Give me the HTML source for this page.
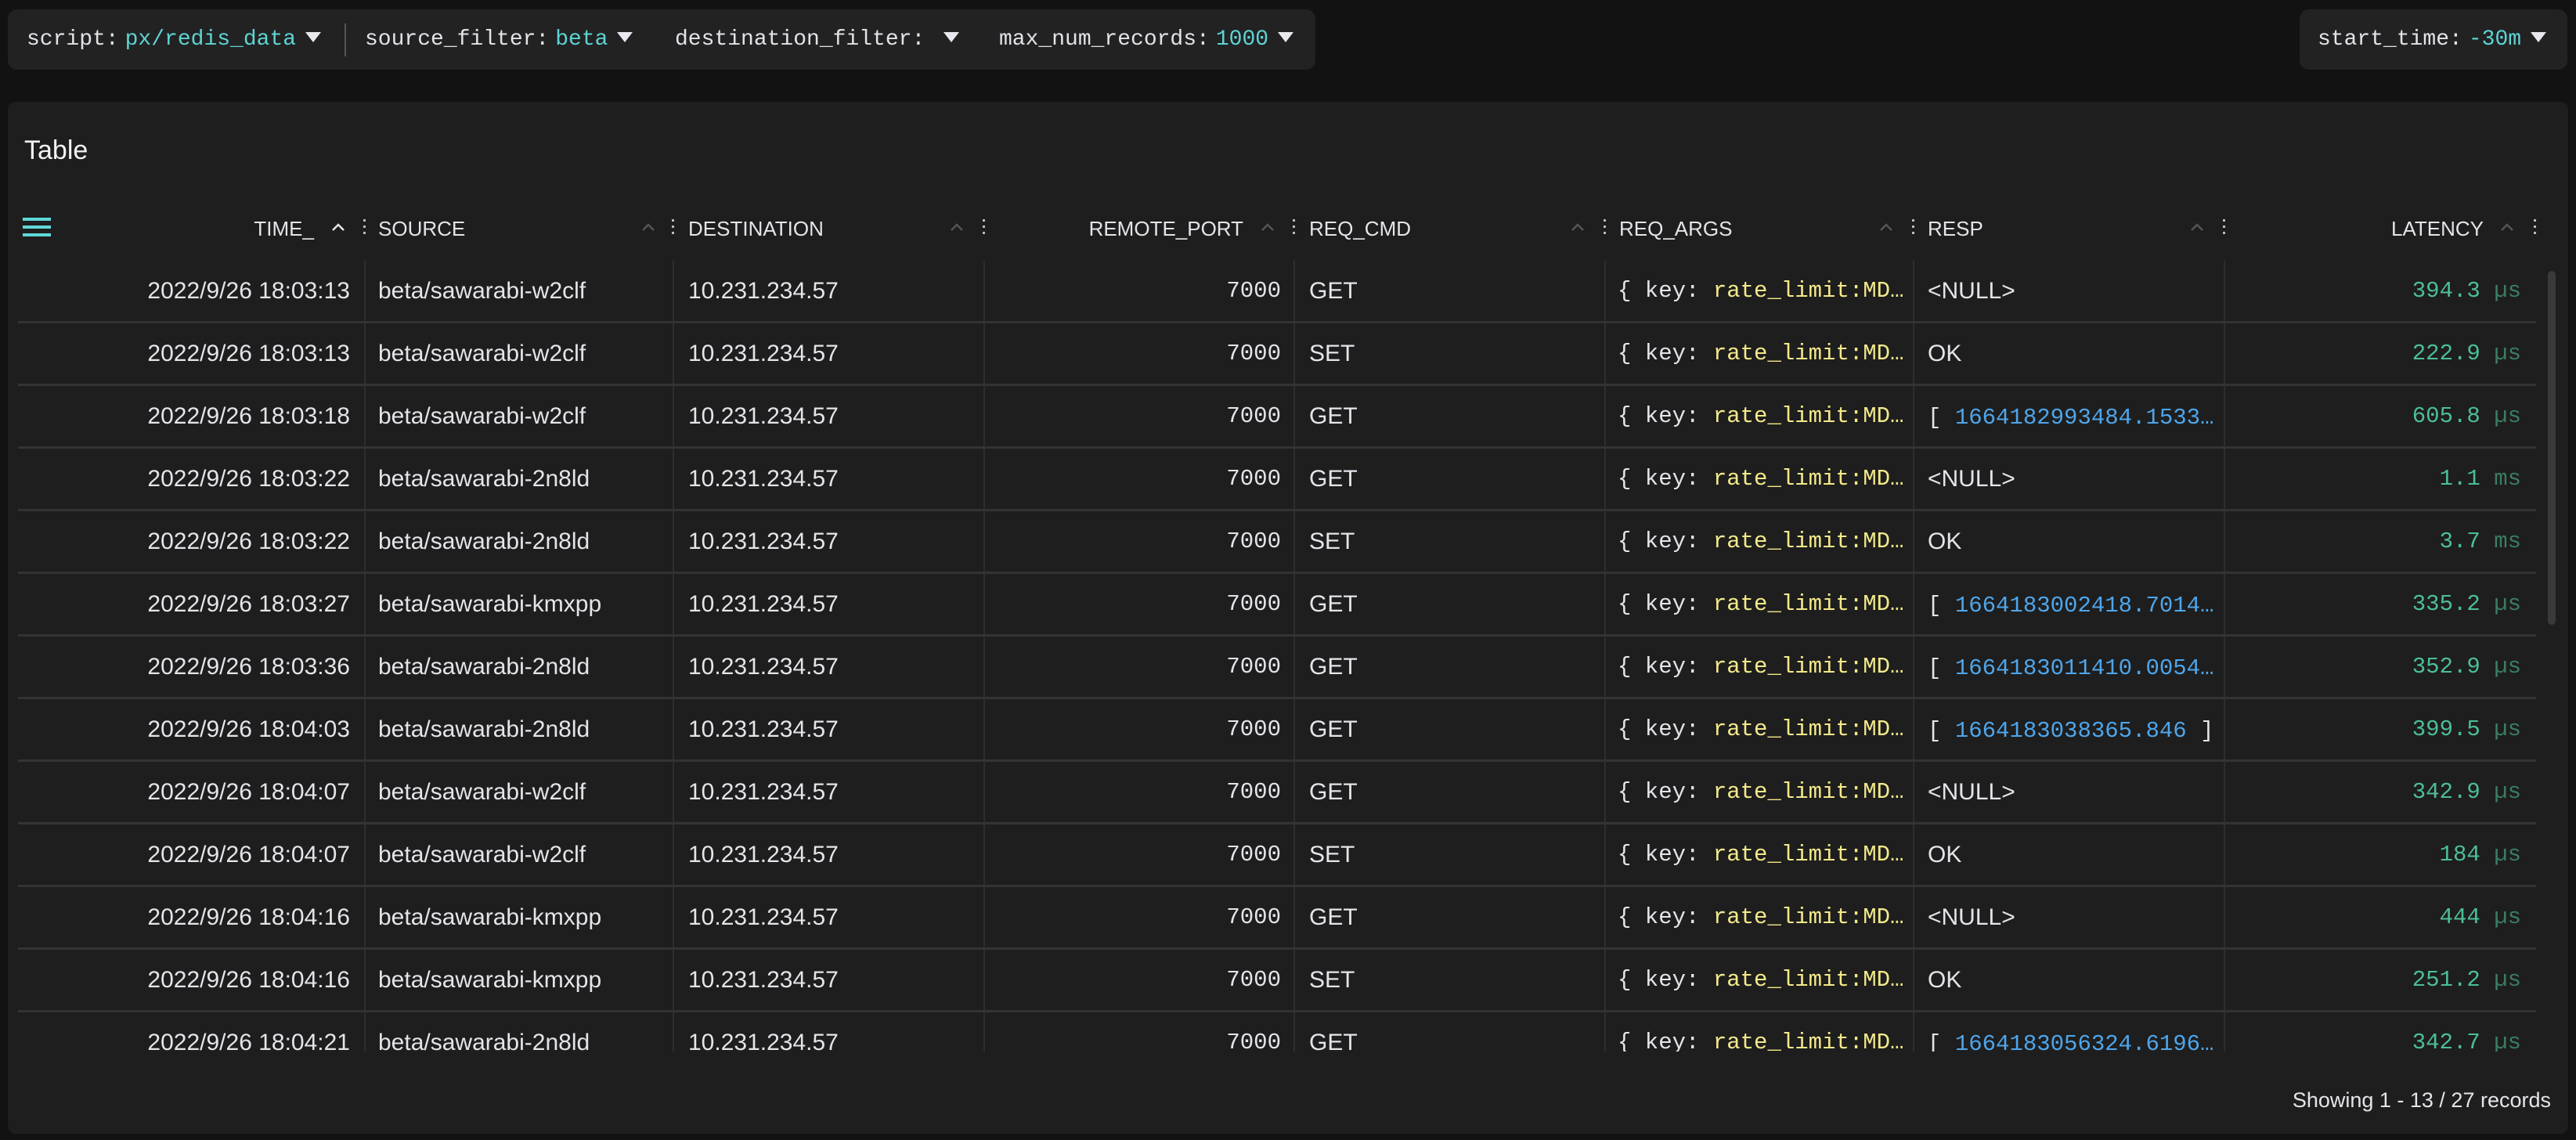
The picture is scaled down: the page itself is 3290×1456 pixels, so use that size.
<!DOCTYPE html>
<html><head><meta charset="utf-8"><style>
*{margin:0;padding:0;box-sizing:border-box}
body{width:3290px;height:1456px;background:#121212;position:relative;overflow:hidden;font-family:"Liberation Sans",sans-serif;color:#e2e2e8}
.bar{position:absolute;top:12px;height:77px;background:#222223;border-radius:12px}
.f{position:absolute;top:0;height:77px;line-height:77px;font-family:"Liberation Mono",monospace;font-size:28px;white-space:nowrap;color:#e2e2e8}
.f b{font-weight:normal;color:#5fd3d3;margin-left:8px}
.tri{display:inline-block;width:0;height:0;border-left:10px solid transparent;border-right:10px solid transparent;border-top:13px solid #e8e8ee;margin-left:12px;vertical-align:3px}
.panel{position:absolute;left:10px;top:130px;width:3270px;height:1318px;background:#1e1e1e;border-radius:10px}
.title{position:absolute;left:31px;top:173px;font-size:34px;color:#f2f2f2}
.ham{position:absolute;left:29px;width:36px;height:4px;background:#5fd8d8}
.h{position:absolute;top:270px;height:44px;line-height:44px;font-size:26px;color:#e4e4ea;white-space:nowrap}
.vl{position:absolute;top:333px;width:2px;height:1010px;background:#2e2e2e}
.hl{position:absolute;left:23px;width:3216px;height:3px;background:#333}
.c{position:absolute;height:80px;line-height:82px;font-size:30px;white-space:nowrap;color:#e4e4ea}
.m{font-family:"Liberation Mono",monospace;font-size:29px}
.y{color:#f3e98a}.bl{color:#4ea6ec}.g{color:#4cbf95}.gu{color:#3a7d62}
.clip{position:absolute;left:0;top:331px;width:3290px;height:1012px;overflow:hidden}
</style></head><body>
<div class="bar" style="left:10px;width:1670px">
 <div class="f" style="left:24px">script:<b>px/redis_data</b><span class="tri"></span></div>
 <div style="position:absolute;left:430px;top:18px;width:2px;height:42px;background:#555"></div>
 <div class="f" style="left:456px">source_filter:<b>beta</b><span class="tri"></span></div>
 <div class="f" style="left:852px">destination_filter:<span class="tri" style="margin-left:24px"></span></div>
 <div class="f" style="left:1266px">max_num_records:<b>1000</b><span class="tri"></span></div>
</div>
<div class="bar" style="left:2937px;width:342px">
 <div class="f" style="left:23px">start_time:<b>-30m</b><span class="tri"></span></div>
</div>
<div class="panel"></div>
<div class="title">Table</div>
<div class="ham" style="top:278px"></div><div class="ham" style="top:288px"></div><div class="ham" style="top:298px"></div>
<div class="h" style="right:2889px">TIME_</div>
<div class="h" style="left:483px">SOURCE</div>
<div class="h" style="left:879px">DESTINATION</div>
<div class="h" style="right:1702px">REMOTE_PORT</div>
<div class="h" style="left:1672px">REQ_CMD</div>
<div class="h" style="left:2068px">REQ_ARGS</div>
<div class="h" style="left:2462px">RESP</div>
<div class="h" style="right:118px">LATENCY</div>
<svg style="position:absolute;left:0;top:0" width="3290" height="340">
<g fill="none" stroke-width="2.5">
<path d="M425 294 l7 -7 l7 7" stroke="#e4e4ea"/>
<path d="M821 294 l7 -7 l7 7" stroke="#555"/>
<path d="M1215 294 l7 -7 l7 7" stroke="#555"/>
<path d="M1612 294 l7 -7 l7 7" stroke="#555"/>
<path d="M2008 294 l7 -7 l7 7" stroke="#555"/>
<path d="M2402 294 l7 -7 l7 7" stroke="#555"/>
<path d="M2799 294 l7 -7 l7 7" stroke="#555"/>
<path d="M3195 294 l7 -7 l7 7" stroke="#555"/>
</g>
<g fill="#bbb">
<rect x="464" y="280" width="3" height="3"/><rect x="464" y="288" width="3" height="3"/><rect x="464" y="296" width="3" height="3"/>
<rect x="858" y="280" width="3" height="3"/><rect x="858" y="288" width="3" height="3"/><rect x="858" y="296" width="3" height="3"/>
<rect x="1255" y="280" width="3" height="3"/><rect x="1255" y="288" width="3" height="3"/><rect x="1255" y="296" width="3" height="3"/>
<rect x="1651" y="280" width="3" height="3"/><rect x="1651" y="288" width="3" height="3"/><rect x="1651" y="296" width="3" height="3"/>
<rect x="2048" y="280" width="3" height="3"/><rect x="2048" y="288" width="3" height="3"/><rect x="2048" y="296" width="3" height="3"/>
<rect x="2442" y="280" width="3" height="3"/><rect x="2442" y="288" width="3" height="3"/><rect x="2442" y="296" width="3" height="3"/>
<rect x="2839" y="280" width="3" height="3"/><rect x="2839" y="288" width="3" height="3"/><rect x="2839" y="296" width="3" height="3"/>
<rect x="3236" y="280" width="3" height="3"/><rect x="3236" y="288" width="3" height="3"/><rect x="3236" y="296" width="3" height="3"/>
</g></svg>
<div class="vl" style="left:465px"></div><div class="vl" style="left:859px"></div><div class="vl" style="left:1256px"></div><div class="vl" style="left:1652px"></div><div class="vl" style="left:2049px"></div><div class="vl" style="left:2443px"></div><div class="vl" style="left:2840px"></div>
<div class="clip" id="rows"></div>
<div style="position:absolute;left:3254px;top:346px;width:10px;height:452px;background:#3a3a3a;border-radius:5px"></div>
<div style="position:absolute;right:32px;top:1390px;font-size:27px;color:#e4e4ea">Showing 1 - 13 / 27 records</div>
<script>
var d=[["2022/9/26 18:03:13","w2clf","GET","n","394.3","µs"],["2022/9/26 18:03:13","w2clf","SET","o","222.9","µs"],["2022/9/26 18:03:18","w2clf","GET","1664182993484.1533…","605.8","µs"],["2022/9/26 18:03:22","2n8ld","GET","n","1.1","ms"],["2022/9/26 18:03:22","2n8ld","SET","o","3.7","ms"],["2022/9/26 18:03:27","kmxpp","GET","1664183002418.7014…","335.2","µs"],["2022/9/26 18:03:36","2n8ld","GET","1664183011410.0054…","352.9","µs"],["2022/9/26 18:04:03","2n8ld","GET","1664183038365.846 ]","399.5","µs"],["2022/9/26 18:04:07","w2clf","GET","n","342.9","µs"],["2022/9/26 18:04:07","w2clf","SET","o","184","µs"],["2022/9/26 18:04:16","kmxpp","GET","n","444","µs"],["2022/9/26 18:04:16","kmxpp","SET","o","251.2","µs"],["2022/9/26 18:04:21","2n8ld","GET","1664183056324.6196…","342.7","µs"]];
var h="";
d.forEach(function(r,i){var t=i*80;
var resp=r[3]=="n"?'&lt;NULL&gt;':r[3]=="o"?'OK':(r[3].slice(-1)=="]"?'<span class="m">[ <span class="bl">'+r[3].slice(0,-2)+'</span> ]</span>':'<span class="m">[ <span class="bl">'+r[3]+'</span></span>');
h+='<div class="c" style="top:'+t+'px;right:2843px">'+r[0]+'</div>';
h+='<div class="c" style="top:'+t+'px;left:483px">beta/sawarabi-'+r[1]+'</div>';
h+='<div class="c" style="top:'+t+'px;left:879px">10.231.234.57</div>';
h+='<div class="c m" style="top:'+t+'px;right:1654px">7000</div>';
h+='<div class="c" style="top:'+t+'px;left:1672px">'+r[2]+'</div>';
h+='<div class="c m" style="top:'+t+'px;left:2066px">{ key: <span class="y">rate_limit:MD…</span></div>';
h+='<div class="c" style="top:'+t+'px;left:2462px">'+resp+'</div>';
h+='<div class="c m" style="top:'+t+'px;right:70px"><span class="g">'+r[4]+'</span> <span class="gu">'+r[5]+'</span></div>';
if(i<12)h+='<div class="hl" style="top:'+(t+79)+'px"></div>';
});
document.getElementById("rows").innerHTML=h;
</script>
</body></html>
